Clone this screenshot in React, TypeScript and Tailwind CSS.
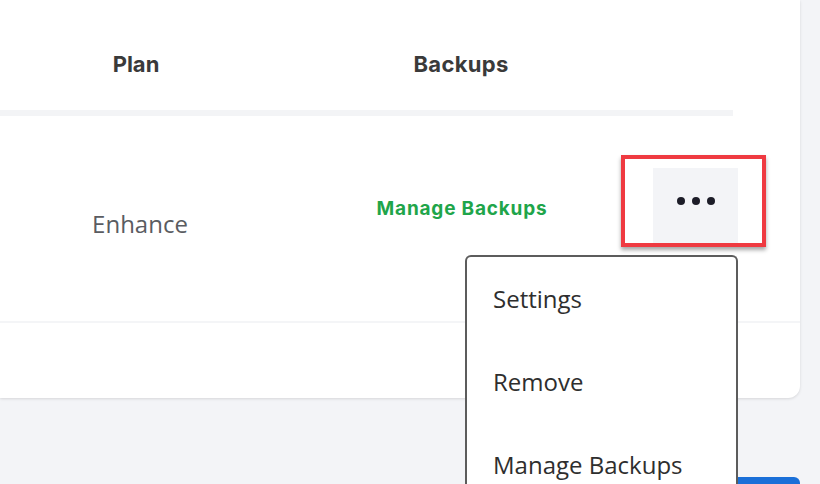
import React from "react";

export default function App() {
  const head = { fontFamily: "Inter, 'Noto Sans', sans-serif" };
  const body = { fontFamily: "'Open Sans', 'Noto Sans', sans-serif" };
  return (
    <div className="relative h-[484px] w-[820px] overflow-hidden bg-[#f3f4f7]">
      <div className="h-[398px] w-[800px] rounded-br-xl bg-white shadow-[0_1px_3px_rgba(0,0,0,0.12)]">
        {/* header */}
        <div className="flex h-[110px] w-[733px] items-center pt-[18px] text-[22px] font-bold text-[#3a3a3a]" style={head}>
          <div className="w-[272px] text-center">Plan</div>
          <div className="w-[378px] text-center tracking-[0.3px]">Backups</div>
        </div>
        <div className="h-[6px] w-[733px] bg-[#f3f4f6]" />
        {/* row */}
        <div className="flex h-[207px] items-start border-b-2 border-[#f4f5f7]">
          <div className="mt-[92px] w-[280px] text-center text-[24px] leading-[32px] text-[#5a5c61]" style={body}>
            Enhance
          </div>
          <div
            className="mt-[80px] w-[364px] text-center text-[19px] font-bold leading-[26px] tracking-[0.8px] text-[#1fa54a]"
            style={head}
          >
            Manage Backups
          </div>
          <div className="ml-[-23px] mt-[39px] flex h-[92px] w-[145px] items-end border-4 border-[#ef3a41] pl-[28px] shadow-[0_3px_4px_rgba(0,0,0,0.35)]">
            <div className="flex h-[75px] w-[85px] items-center justify-center gap-[7px] bg-[#f3f4f7] pb-[10px]">
              <span className="h-[8px] w-[8px] rounded-full bg-[#1c1c28]" />
              <span className="h-[8px] w-[8px] rounded-full bg-[#1c1c28]" />
              <span className="h-[8px] w-[8px] rounded-full bg-[#1c1c28]" />
            </div>
          </div>
        </div>
      </div>

      <div className="absolute left-[700px] top-[477px] h-[20px] w-[100px] rounded-t-md bg-[#1a6fd8]" />

      {/* dropdown */}
      <div
        className="absolute left-[465px] top-[255px] w-[273px] rounded-t-md border-2 border-b-0 border-[#5c5c5c] bg-white pl-[26px] text-[24px] text-[#2e2e2e]"
        style={body}
      >
        <div className="flex h-[83px] items-center">Settings</div>
        <div className="flex h-[83px] items-center">Remove</div>
        <div className="flex h-[83px] items-center">Manage Backups</div>
      </div>
    </div>
  );
}
